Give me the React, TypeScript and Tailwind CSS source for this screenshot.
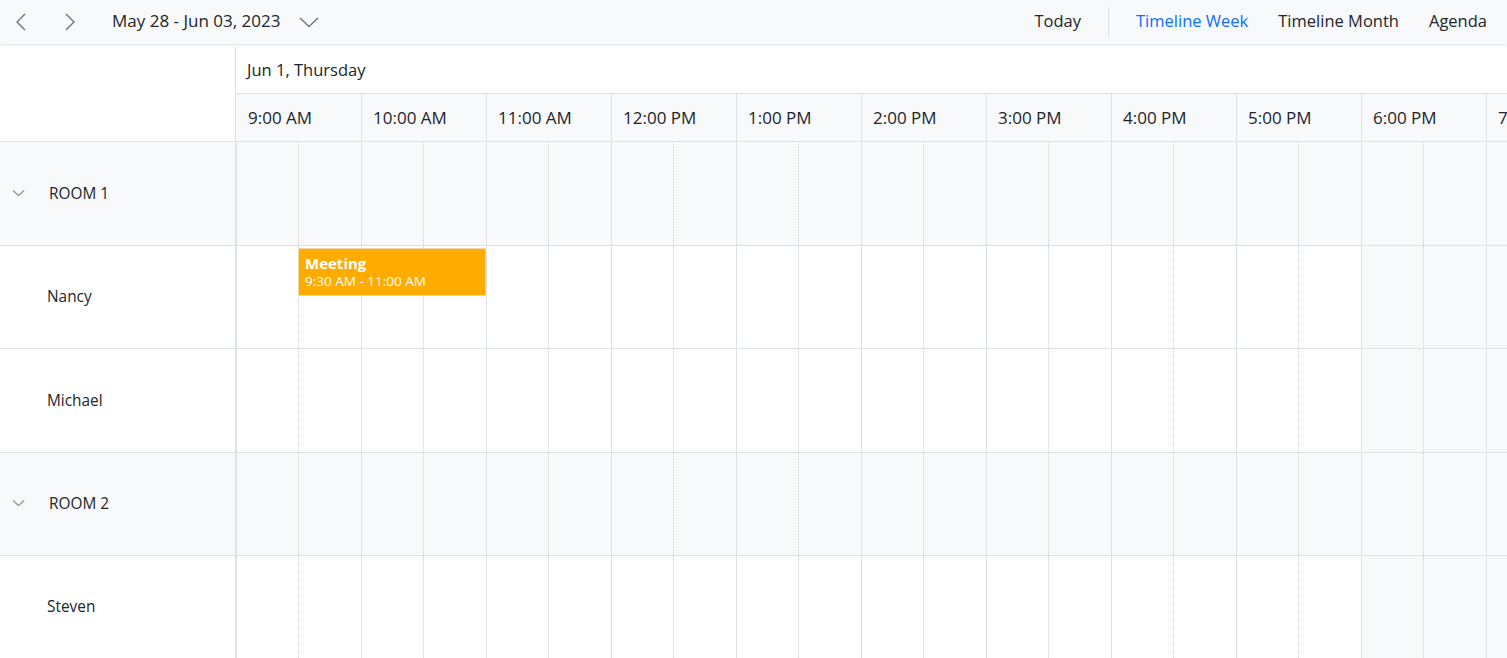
import React from 'react';

const hours = ['9:00 AM', '10:00 AM', '11:00 AM', '12:00 PM', '1:00 PM', '2:00 PM', '3:00 PM', '4:00 PM', '5:00 PM', '6:00 PM', '7:00 PM'];

type Row = { name: string; group?: boolean; h: string };

const rows: Row[] = [
  { name: 'ROOM 1', group: true, h: 'h-[104px]' },
  { name: 'Nancy', h: 'h-[103px]' },
  { name: 'Michael', h: 'h-[104px]' },
  { name: 'ROOM 2', group: true, h: 'h-[103px]' },
  { name: 'Steven', h: 'h-[103px]' },
];

const Chevron = ({ dir }: { dir: 'left' | 'right' }) => (
  <svg width="14" height="20" viewBox="0 0 14 20" fill="none">
    <polyline
      points={dir === 'left' ? '11,2 3,10 11,18' : '3,2 11,10 3,18'}
      stroke="#6c757d"
      strokeWidth="1.4"
      strokeLinejoin="round"
    />
  </svg>
);

const TimelineCells = ({ group }: { group?: boolean }) => (
  <div className="flex">
    {hours.map((h, i) => {
      const off = group || i >= 9;
      return (
        <div
          key={h}
          className={`flex w-[125px] shrink-0 border-l border-[#dee2e6] ${off ? 'bg-[#f8f9fa]' : 'bg-white'}`}
        >
          <div className="w-[62px] shrink-0 border-r border-dotted border-[#d0d4d8]" />
          <div className="flex-1" />
        </div>
      );
    })}
  </div>
);

export default function App() {
  return (
    <div
      className="h-[658px] w-[1507px] overflow-hidden bg-white text-[#212529]"
      style={{ fontFamily: '"Segoe UI", "Open Sans", "Noto Sans", sans-serif' }}
    >
      {/* toolbar */}
      <div className="relative z-10 flex h-[44px] items-center bg-[#f8f9fa] shadow-[0_1px_3px_rgba(0,0,0,0.12)]">
        <button className="ml-[14px] flex h-[30px] w-[14px] items-center">
          <Chevron dir="left" />
        </button>
        <button className="ml-[35px] flex h-[30px] w-[14px] items-center">
          <Chevron dir="right" />
        </button>
        <div className="ml-[35px] mb-[2px] flex items-center text-[17px]">
          <span>May 28 - Jun 03, 2023</span>
          <svg className="ml-[19px] mt-[2px]" width="20" height="12" viewBox="0 0 20 12" fill="none">
            <polyline points="1,2 10,10.5 19,2" stroke="#6c757d" strokeWidth="1.4" strokeLinejoin="round" />
          </svg>
        </div>
        <div className="ml-auto mr-[20px] mb-[2px] flex items-center text-[16.5px]">
          <span>Today</span>
          <span className="mx-[27px] mt-[2px] h-[30px] w-px bg-[#dee2e6]" />
          <span className="text-[#0d6efd]">Timeline Week</span>
          <span className="ml-[30px]">Timeline Month</span>
          <span className="ml-[30px]">Agenda</span>
        </div>
      </div>

      {/* scheduler */}
      <div className="pt-[3px]">
        {/* header */}
        <div className="flex border-b border-[#dee2e6]">
          <div className="w-[236px] shrink-0 border-r border-[#dee2e6]" />
          <div className="flex flex-col">
            <div className="flex h-[47px] items-center border-b border-[#dee2e6] pl-[11px] pt-[1px] text-[16.5px]">
              Jun 1, Thursday
            </div>
            <div className="flex h-[47px]">
              {hours.map((h) => (
                <div
                  key={h}
                  className="flex w-[125px] shrink-0 items-center border-l border-[#dee2e6] bg-[#f8f9fa] pl-[11px] text-[17px] first:border-l-0 first:pl-[12px]"
                >
                  {h}
                </div>
              ))}
            </div>
          </div>
        </div>

        {/* body */}
        {rows.map((r) => (
          <div key={r.name} className={`flex ${r.h} border-b border-[#dee2e6]`}>
            <div
              className={`flex w-[236px] shrink-0 items-center border-r border-[#dee2e6] text-[15.4px] ${r.group ? 'bg-[#f8f9fa]' : 'bg-white'}`}
            >
              {r.group ? (
                <>
                  <svg className="ml-[12px] mb-[2px]" width="13" height="8" viewBox="0 0 13 8" fill="none">
                    <polyline points="1,1.5 6.5,6.5 12,1.5" stroke="#8a9199" strokeWidth="1.1" strokeLinejoin="round" />
                  </svg>
                  <span className="ml-[24px]">{r.name}</span>
                </>
              ) : (
                <span className="ml-[47px]">{r.name}</span>
              )}
            </div>
            <div className="relative">
              <div className="flex h-full">
                <TimelineCells group={r.group} />
              </div>
              {r.name === 'Nancy' && (
                <div className="absolute left-[62px] top-[2px] flex h-[48px] w-[188px] flex-col justify-center border border-[#f0d9a8] bg-[#ffab00] px-[6px] text-white">
                  <span className="text-[15px] font-bold leading-[19px]">Meeting</span>
                  <span className="text-[13.5px] leading-[17px]">9:30 AM - 11:00 AM</span>
                </div>
              )}
            </div>
          </div>
        ))}
      </div>
    </div>
  );
}
